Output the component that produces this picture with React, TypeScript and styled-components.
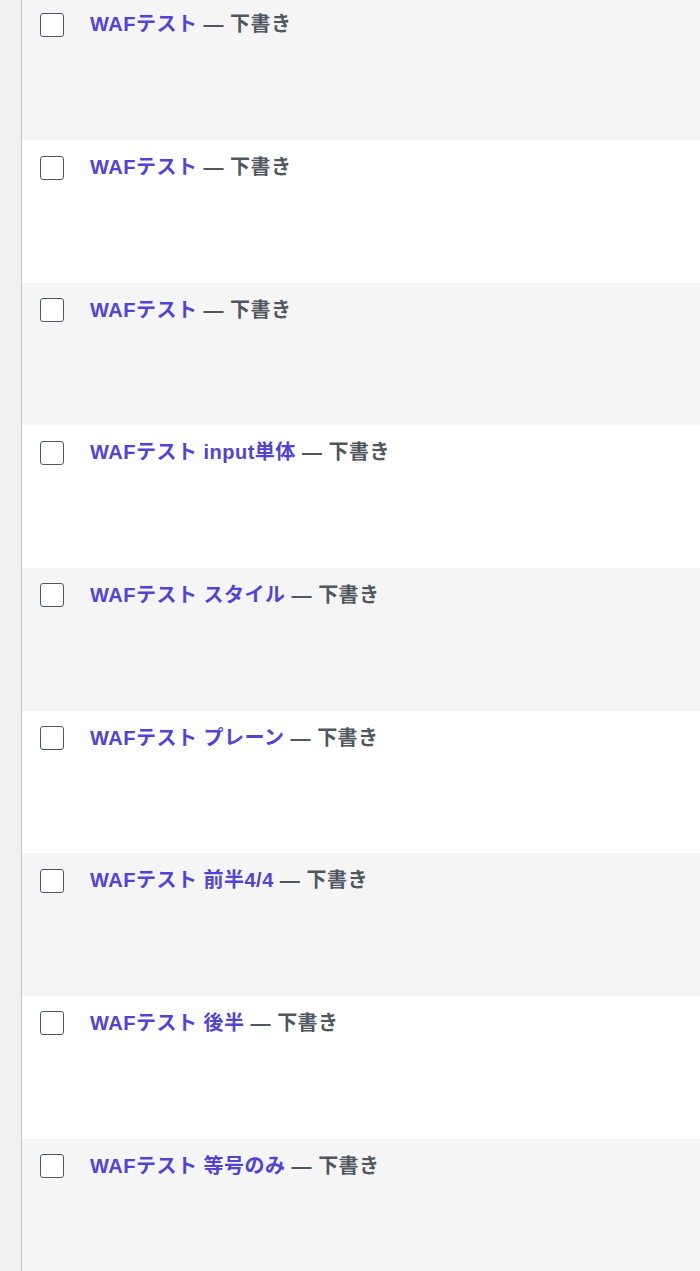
import React from 'react'
import styled, { createGlobalStyle } from 'styled-components'

type Post = {
  title: string,
  state: string,
}

const posts: Post[] = [
  { title: 'WAFテスト', state: '下書き' },
  { title: 'WAFテスト', state: '下書き' },
  { title: 'WAFテスト', state: '下書き' },
  { title: 'WAFテスト input単体', state: '下書き' },
  { title: 'WAFテスト スタイル', state: '下書き' },
  { title: 'WAFテスト プレーン', state: '下書き' },
  { title: 'WAFテスト 前半4/4', state: '下書き' },
  { title: 'WAFテスト 後半', state: '下書き' },
  { title: 'WAFテスト 等号のみ', state: '下書き' },
]

const GlobalStyle = createGlobalStyle`
  html, body {
    margin: 0;
    padding: 0;
    background: #fff;
  }
  body {
    font-family: "Liberation Sans", "Noto Sans CJK JP", sans-serif;
    -webkit-font-smoothing: antialiased;
  }
`

const Page = styled.div`
  display: flex;
  width: 700px;
  height: 1271px;
  overflow: hidden;
`

const AdminStrip = styled.div`
  flex: 0 0 21px;
  background: #f0f0f1;
  border-right: 1px solid #c3c4c7;
`

const List = styled.ul`
  flex: 1;
  list-style: none;
  margin: -2.67px 0 0;
  padding: 0;
`

const Row = styled.li<{ $striped: boolean }>`
  display: flex;
  align-items: flex-start;
  gap: 26px;
  height: 142.67px;
  padding: 0 0 0 18px;
  box-sizing: border-box;
  background: ${ p => p.$striped ? '#f5f5f5' : '#fff' };
`

const Check = styled.span`
  flex: 0 0 auto;
  display: block;
  width: 24px;
  height: 24px;
  margin-top: 15.5px;
  box-sizing: border-box;
  border: 1.5px solid #50575e;
  border-radius: 3px;
  background: #fff;
`

const Title = styled.div`
  padding-top: 12px;
  font-size: 20px;
  line-height: 30px;
  font-weight: 700;
  letter-spacing: 0.5px;
  color: #50575e;
  white-space: nowrap;
`

const PostLink = styled.a`
  color: #5242d8;
  text-decoration: none;
`

const App = () => (
  <>
    <GlobalStyle />
    <Page>
      <AdminStrip />
      <List>
        { posts.map((post, i) => (
          <Row key={ i } $striped={ i % 2 === 0 }>
            <Check />
            <Title>
              <PostLink href="#">{ post.title }</PostLink> — { post.state }
            </Title>
          </Row>
        )) }
      </List>
    </Page>
  </>
)

export default App
